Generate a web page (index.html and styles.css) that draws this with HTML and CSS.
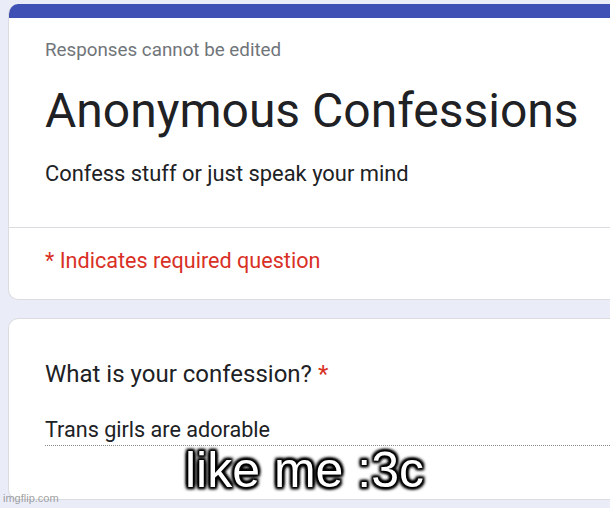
FILE: index.html
```html
<!DOCTYPE html>
<html>
<head>
<meta charset="utf-8">
<link rel="stylesheet" href="styles.css">
</head>
<body>
<div class="page">
  <section class="card header-card">
    <div class="bar"></div>
    <div class="intro">
      <p class="note">Responses cannot be edited</p>
      <h1 class="title">Anonymous Confessions</h1>
      <p class="desc">Confess stuff or just speak your mind</p>
    </div>
    <div class="required">* Indicates required question</div>
  </section>
  <section class="card question-card">
    <div class="question">What is your confession? <span class="star">*</span></div>
    <div class="answer">Trans girls are adorable</div>
  </section>
</div>
<div class="caption">like me :3c</div>
<div class="watermark">imgflip.com</div>
</body>
</html>
```
FILE: styles.css
```css
html, body {
  margin: 0;
  padding: 0;
}
body {
  width: 610px;
  height: 508px;
  overflow: hidden;
  background: #eaedf7;
  font-family: Roboto, "Noto Sans", sans-serif;
  color: #202124;
  position: relative;
}
.page {
  display: flex;
  flex-direction: column;
  gap: 18px;
  padding: 4px 0 0 8px;
  width: 602px;
}
.card {
  background: #fff;
  border: 1px solid #dadce0;
  border-right: none;
  border-radius: 10px 0 0 10px;
  overflow: hidden;
  white-space: nowrap;
}
.header-card {
  border-top: none;
}
.bar {
  height: 14px;
  background: #3f51b5;
}
.intro {
  padding: 20px 0 39px 36px;
  border-bottom: 1px solid #dadce0;
}
.note {
  margin: 0;
  font-size: 18.8px;
  line-height: 24px;
  color: #70757a;
}
.title {
  margin: 19px 0 0;
  font-size: 48px;
  font-weight: 400;
  line-height: 60px;
  color: #202124;
}
.desc {
  margin: 19px 0 0;
  font-size: 21.9px;
  line-height: 28px;
}
.required {
  padding: 19px 0 24px 36px;
  font-size: 21.6px;
  line-height: 28px;
  color: #d93025;
}
.question-card {
  box-sizing: border-box;
  height: 182px;
  padding: 40px 0 0 36px;
}
.question {
  font-size: 24px;
  line-height: 30px;
}
.star {
  color: #d93025;
}
.answer {
  margin-top: 27px;
  font-size: 21.6px;
  line-height: 28px;
  border-bottom: 1px dotted #8a8a8a;
  padding-bottom: 1px;
}
.caption {
  position: absolute;
  left: 185px;
  top: 442px;
  font-family: "Liberation Sans", Arial, sans-serif;
  font-size: 50px;
  line-height: 56px;
  color: #fff;
  text-shadow: 0 0 1px #000, 0 0 2px #000, 0 0 2px #000, 0 0 3px #000, 0 0 3px #000, 0 0 4px #000, 0 0 5px #000, 2px 2px 3px #000, -2px -2px 3px #000, 2px -2px 3px #000, -2px 2px 3px #000;
}
.watermark {
  position: absolute;
  left: 3px;
  top: 492px;
  font-family: "Liberation Sans", Arial, sans-serif;
  font-size: 11px;
  line-height: 13px;
  color: rgba(120, 120, 120, 0.7);
}
```
